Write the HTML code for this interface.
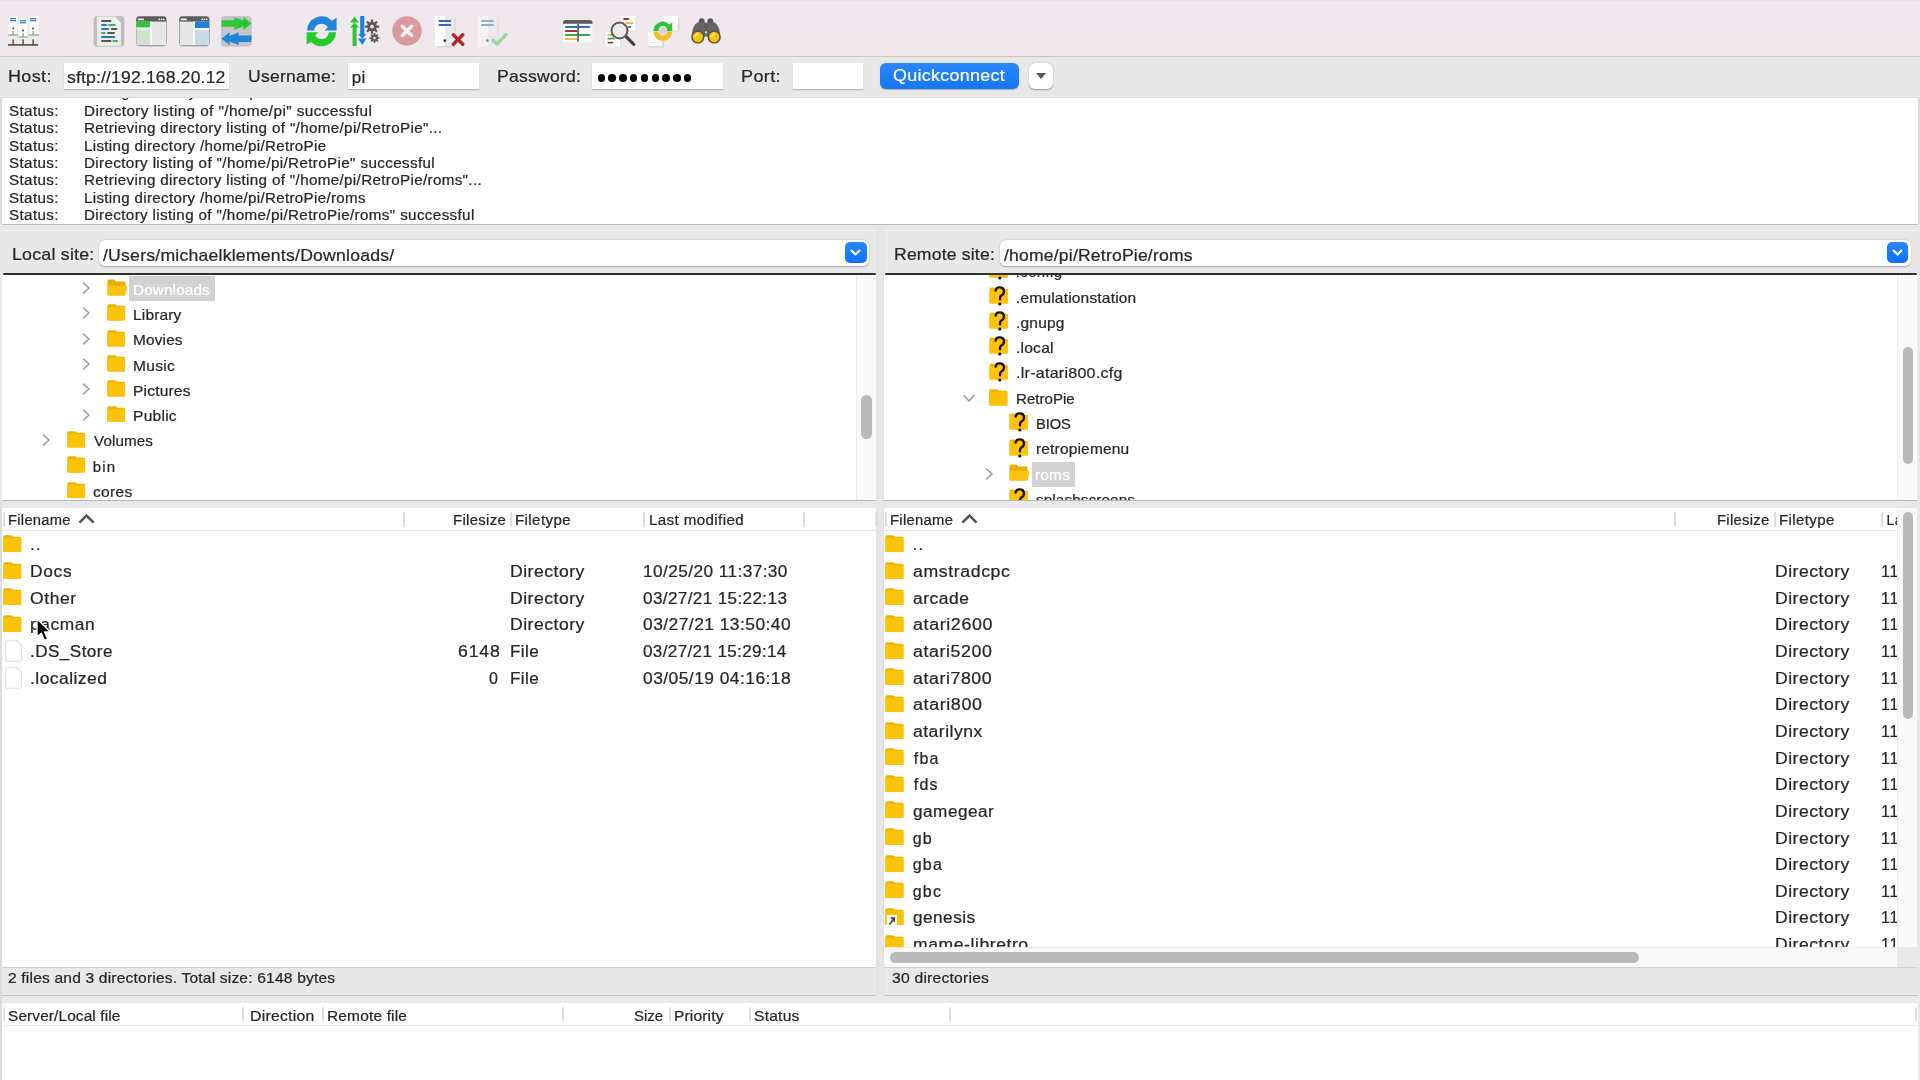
<!DOCTYPE html>
<html><head><meta charset="utf-8">
<style>
*{box-sizing:border-box;margin:0;padding:0}
html,body{width:1920px;height:1080px;overflow:hidden}
body{position:relative;background:#e8e8e8;font-family:"Liberation Sans",sans-serif;color:#262626}
.a{position:absolute;display:block}
.t{position:absolute;white-space:nowrap;line-height:1;-webkit-text-stroke:0.22px currentColor}
</style></head><body><div id="root" style="position:absolute;left:0;top:0;width:1920px;height:1080px;overflow:hidden;will-change:transform">
<div class="a" style="left:0px;top:0px;width:1920px;height:56px;background:linear-gradient(#f1e7ed,#efe9ec)"></div>
<div class="a" style="left:0px;top:0px;width:1920px;height:1px;background:#e9e1e6"></div>
<div class="a" style="left:0px;top:56px;width:1920px;height:1px;background:#c8c5c7"></div>
<svg class="a" style="left:0;top:0" width="760" height="56" viewBox="0 0 760 56">
<!-- 1 site manager (origin 4,12) -->
<g transform="translate(4,12)">
 <rect x="4.2" y="4" width="9.6" height="20" fill="#fbfbfb" stroke="#e2e2e2" stroke-width=".6"/>
 <rect x="24.2" y="4" width="11" height="20" fill="#fbfbfb" stroke="#e2e2e2" stroke-width=".6"/>
 <rect x="14" y="6" width="10" height="20" fill="#fdfdfd" stroke="#e2e2e2" stroke-width=".6"/>
 <rect x="6" y="6" width="6" height="1.3" fill="#3f7fc0"/><rect x="6" y="8" width="6" height="1.3" fill="#3f7fc0"/>
 <rect x="16" y="8" width="6" height="1.3" fill="#3f7fc0"/><rect x="16" y="10" width="6" height="1.3" fill="#3f7fc0"/>
 <rect x="26" y="6" width="6" height="1.3" fill="#3f7fc0"/><rect x="26" y="8" width="6" height="1.3" fill="#3f7fc0"/>
 <circle cx="9.3" cy="16.3" r=".9" fill="#333"/><circle cx="19" cy="18.5" r=".9" fill="#333"/><circle cx="29" cy="16.5" r=".9" fill="#333"/>
 <rect x="4.5" y="22.3" width="9.5" height="1.3" fill="#8aa98a"/><rect x="14.5" y="24.3" width="9.5" height="1.3" fill="#8aa98a"/><rect x="24.5" y="22.3" width="10.5" height="1.3" fill="#8aa98a"/>
 <rect x="8.5" y="19" width="1.2" height="4" fill="#7d9c7d"/><rect x="18.5" y="21" width="1.2" height="4" fill="#7d9c7d"/><rect x="28.5" y="19" width="1.2" height="4" fill="#7d9c7d"/>
 <rect x="8.3" y="27.3" width="1.6" height="6" fill="#5c5c5c"/><rect x="18.3" y="27.3" width="1.6" height="6" fill="#5c5c5c"/><rect x="28.3" y="27.3" width="1.6" height="6" fill="#5c5c5c"/>
 <rect x="4" y="32" width="30" height="1.8" fill="#5c5c5c"/>
</g>
<!-- 2 message log (origin 88,12) -->
<g transform="translate(88,12)">
 <rect x="5.6" y="4.1" width="30.7" height="30.7" rx="4" fill="#bdbdbd"/>
 <path d="M8.9 4.6 L26.5 4.6 L33 11 L33 34 L8.9 34 Z" fill="#ececec"/>
 <path d="M26.5 4.6 L26.5 11 L33 11 Z" fill="#fafafa"/>
 <g stroke-width="1.9" stroke-linecap="round">
 <path d="M14 9 H22.5" stroke="#555"/>
 <path d="M14 13 H18.3" stroke="#2d73c2"/><path d="M21.3 13 H26.8" stroke="#3cb64a"/>
 <path d="M14 17 H20.3" stroke="#2d73c2"/><path d="M23.8 17 H28.5" stroke="#555"/>
 <path d="M14 21 H16.8" stroke="#3cb64a"/><path d="M20 21 H26" stroke="#555"/>
 <path d="M14 25 H26.3" stroke="#2d73c2"/>
 <path d="M14 29 H22.5" stroke="#555"/><path d="M25.3 29 H29" stroke="#3cb64a"/>
 </g>
</g>
<!-- 3 local tree (origin 132,12) -->
<g transform="translate(132,12)">
 <rect x="4" y="5" width="30.5" height="29.5" rx="3" fill="#b5b5b5"/>
 <rect x="4.3" y="4.3" width="30" height="29" rx="3" fill="#5d5d5d"/>
 <rect x="4.6" y="9.6" width="29.4" height="23.4" fill="#e7e7e7"/>
 <rect x="4.6" y="9.6" width="13.5" height="6" fill="#2fc83a"/>
 <rect x="4.6" y="17.5" width="13.5" height="15.5" fill="#cfe2cc"/>
 <rect x="4.6" y="15.6" width="13.5" height="1.9" fill="#f4fff4"/>
 <rect x="18.1" y="9.6" width="1.9" height="23.4" fill="#f4fff4"/>
 <rect x="5.8" y="6.6" width="6" height="1.6" fill="#fff"/>
 <circle cx="27.2" cy="7.4" r=".8" fill="#fff"/><circle cx="29.5" cy="7.4" r=".8" fill="#fff"/><circle cx="31.7" cy="7.4" r=".8" fill="#fff"/>
</g>
<!-- 4 remote tree (origin 175,12) -->
<g transform="translate(175,12)">
 <rect x="4" y="5" width="30.5" height="29.5" rx="3" fill="#b5b5b5"/>
 <rect x="4.3" y="4.3" width="30" height="29" rx="3" fill="#5d5d5d"/>
 <rect x="4.6" y="9.6" width="29.4" height="23.4" fill="#e7e7e7"/>
 <rect x="20" y="9.6" width="14" height="6.4" fill="#1e82d8"/>
 <rect x="20" y="18" width="14" height="15" fill="#c9d9e6"/>
 <rect x="20" y="16" width="14" height="2" fill="#f4fbff"/>
 <rect x="18.1" y="9.6" width="1.9" height="23.4" fill="#f4fbff"/>
 <rect x="5.8" y="6.6" width="6" height="1.6" fill="#fff"/>
 <circle cx="27.2" cy="7.4" r=".8" fill="#fff"/><circle cx="29.5" cy="7.4" r=".8" fill="#fff"/><circle cx="31.7" cy="7.4" r=".8" fill="#fff"/>
</g>
<!-- 5 transfer queue (origin 217,12) -->
<g transform="translate(217,12)">
 <rect x="4" y="4" width="30.8" height="30.8" rx="4" fill="#c6c4c6"/>
 <path d="M4.6 8.2 H17.4 V5 L26.4 8.6 V5 L34.6 11.5 L26.4 18 V14.4 L17.4 18 V14.8 H4.6 Z" fill="#2cc936"/>
 <path d="M26.4 8.6 L34.6 11.5 L26.4 14.4 Z" fill="#27b832" opacity=".5"/>
 <path d="M34.4 23.5 H21.6 V20.3 L12.6 23.9 V20.3 L4.4 26.7 L12.6 33.1 V29.5 L21.6 33.1 V29.9 H34.4 Z" fill="#1f84d8"/>
</g>
<!-- 6 refresh (origin 302,12) -->
<g transform="translate(302,12)">
 <path d="M5 18.5 A14.5 14.5 0 0 1 29.75 8.75 L34.6 5.8 L34.6 18.5 L22.6 18.5 L25.8 15.35 A7.3 7.3 0 0 0 12.2 18.5 Z" fill="#1f85db"/>
 <path d="M34 20.2 A14.5 14.5 0 0 1 9.25 29.9 L4.6 32.6 L4.6 20.2 L16.4 20.2 L13.2 23.3 A7.3 7.3 0 0 0 26.8 20.2 Z" fill="#24cb2f"/>
</g>
<!-- 7 process queue (origin 345,12) -->
<g transform="translate(345,12)">
 <path d="M7.6 34 V15.5 H5 L9.5 10.4 L5 10.4 L9.5 4.6 L14 10.4 L9.6 10.4 L14 15.5 H11.6 V34 Z" fill="#2bc836"/>
 <path d="M15.2 4 H19.3 V22 H21.5 L17.3 26.5 H21.5 L17.3 33 L13 26.5 H17.2 L13 22 H15.2 Z" fill="#1f80d4"/>
 <g fill="#5b5b5b">
  <circle cx="27" cy="14.6" r="4.9"/>
  <g stroke="#5b5b5b" stroke-width="2.2" stroke-linecap="butt">
   <path d="M27 7.4 V21.8 M19.8 14.6 H34.2 M21.9 9.5 L32.1 19.7 M32.1 9.5 L21.9 19.7"/>
  </g>
  <circle cx="29.5" cy="26" r="3.4"/>
  <g stroke="#5b5b5b" stroke-width="1.7">
   <path d="M29.5 21 V31 M24.5 26 H34.5 M26 22.5 L33 29.5 M33 22.5 L26 29.5"/>
  </g>
 </g>
 <circle cx="27" cy="14.6" r="1.9" fill="#efe8ec"/>
 <circle cx="29.5" cy="26" r="1.3" fill="#efe8ec"/>
</g>
<!-- 8 cancel (origin 387,12) -->
<g transform="translate(387,12)">
 <circle cx="20" cy="18.9" r="14.7" fill="#d89a9d"/>
 <path d="M15.3 14.3 L24.7 23.5 M24.7 14.3 L15.3 23.5" stroke="#fbeef0" stroke-width="3.6" stroke-linecap="round"/>
</g>
<!-- 9 disconnect (origin 430,12) -->
<g transform="translate(430,12)">
 <rect x="5" y="4" width="10.2" height="30.5" fill="#fdfdfd"/>
 <rect x="15.2" y="4" width="10" height="30.5" fill="#ebe9ea"/>
 <rect x="24.6" y="5" width=".9" height="29" fill="#cfcfcf"/>
 <rect x="7" y="34.3" width="18" height="1" fill="#c9c9c9"/>
 <path d="M9.4 9 H20.3 M9.4 13 H20.3" stroke="#2b6db3" stroke-width="1.8" stroke-linecap="round"/>
 <circle cx="14.8" cy="28.7" r="1.4" fill="#333"/>
 <path d="M23.3 22.8 L32.8 32.3 M32.8 22.8 L23.3 32.3" stroke="#b02828" stroke-width="3.4" stroke-linecap="round"/>
</g>
<!-- 10 reconnect disabled (origin 473,12) -->
<g transform="translate(473,12)">
 <rect x="5" y="4" width="10.2" height="30.5" fill="#f6f2f4"/>
 <rect x="15.2" y="4" width="10" height="30.5" fill="#ece8ea"/>
 <rect x="24.6" y="5" width=".9" height="29" fill="#dedcdd"/>
 <path d="M9 9 H20 M9 13 H20" stroke="#90aac6" stroke-width="1.8" stroke-linecap="round"/>
 <circle cx="14.3" cy="28.7" r="1.4" fill="#8a8a8a"/>
 <path d="M20 28.3 L23.8 32.1 L32.8 22.8" fill="none" stroke="#9cd59e" stroke-width="3.6" stroke-linecap="round" stroke-linejoin="round"/>
</g>
<!-- 11 filter (origin 558,12) -->
<g transform="translate(558,12)">
 <rect x="5.5" y="9" width="29.5" height="22" fill="#e3dfe1"/>
 <rect x="5" y="11.8" width="29.5" height="18.7" fill="#fff"/>
 <path d="M5 11.8 V10.5 Q5 8 7.5 8 H32 Q34.5 8 34.5 10.5 V11.8 Z" fill="#5d5d5d"/>
 <rect x="19.5" y="11.8" width="1.1" height="17.8" fill="#555"/>
 <g stroke-width="1.8" stroke-linecap="round">
  <path d="M7.8 15 H31.5" stroke="#3173b8"/>
  <path d="M7.8 19 H18.8" stroke="#a63a3a"/>
  <path d="M7.8 23 H31.5" stroke="#3aa84a"/>
  <path d="M7.8 27 H18.8" stroke="#e5c24c"/>
 </g>
 <rect x="19.5" y="11.8" width="1.1" height="17.8" fill="#555"/>
</g>
<!-- 12 search (origin 600,12) -->
<g transform="translate(600,12)">
 <rect x="21.3" y="4.6" width="15" height="14.5" fill="#e6e2e4"/>
 <rect x="20.5" y="4" width="15" height="14.5" fill="#fff"/>
 <path d="M24 7 H28.5" stroke="#a63535" stroke-width="1.8" stroke-linecap="round"/>
 <path d="M26.5 11 H32.5" stroke="#e8c04a" stroke-width="1.8" stroke-linecap="round"/>
 <path d="M28.3 15 H30.5" stroke="#3a9f4a" stroke-width="1.8" stroke-linecap="round"/>
 <rect x="6.3" y="20.6" width="14.5" height="14.5" fill="#e6e2e4"/>
 <rect x="5.5" y="20" width="14.5" height="14.5" fill="#fff"/>
 <path d="M8.3 23 H11.5" stroke="#e8c04a" stroke-width="1.8" stroke-linecap="round"/>
 <path d="M8.3 26.6 H14" stroke="#3a9f4a" stroke-width="1.8" stroke-linecap="round"/>
 <path d="M8.3 30.6 H12.5" stroke="#a63535" stroke-width="1.8" stroke-linecap="round"/>
 <path d="M26.5 25 L33.8 32.3" stroke="#444" stroke-width="3.2" stroke-linecap="round"/>
 <circle cx="19.5" cy="18.5" r="8" fill="#e9e9e9" fill-opacity=".9" stroke="#595959" stroke-width="2"/>
</g>
<!-- 13 sync browse (origin 643,12) -->
<g transform="translate(643,12)">
 <rect x="22" y="5.5" width="14.5" height="14" fill="#d9d5d9"/>
 <rect x="21" y="4" width="14" height="14.3" fill="#fdfdfd"/>
 <path d="M23.5 7 H27.5 M25 11 H31" stroke="#e4e4e4" stroke-width="1.2"/>
 <rect x="6" y="21.5" width="14.6" height="14" fill="#d9d5d9"/>
 <rect x="5" y="20" width="14.3" height="14" fill="#fdfdfd"/>
 <path d="M7.5 30.5 H12" stroke="#e4e4e4" stroke-width="1.2"/>
 <path d="M10.5 19 A9.3 9.3 0 0 1 26.5 12.6 L29.2 10.2 L29.2 19 L22.6 19 L24 17.3 A4.2 4.2 0 0 0 15.6 19 Z" fill="#2ec43a"/>
 <path d="M29.2 19.6 A9.3 9.3 0 0 1 10.5 19.6 L15.6 19.6 A4.2 4.2 0 0 0 24 19.6 Z" fill="#f0c020"/>
 <circle cx="19.8" cy="19.3" r="4" fill="#d8d4d8"/>
</g>
<!-- 14 binoculars (origin 685,12) -->
<g transform="translate(685,12)">
 <path d="M13.8 12 V9 Q13.8 6.2 16.7 6.2 Q19.6 6.2 19.6 9 V12 Z M22.4 12 V9 Q22.4 6.2 25.3 6.2 Q28.2 6.2 28.2 9 V12 Z" fill="#555"/>
 <path d="M6.8 25 C6.8 17 9.5 11.5 13 10.3 L20.5 10.3 L20.5 25 Z" fill="#666"/>
 <path d="M35.2 25 C35.2 17 32.5 11.5 29 10.3 L21.5 10.3 L21.5 25 Z" fill="#666"/>
 <rect x="19.6" y="11" width="2.8" height="12.5" fill="#5c5c5c"/>
 <rect x="20.2" y="19.3" width="1.6" height="2" fill="#fafafa"/>
 <circle cx="12.8" cy="25" r="6.6" fill="#5e4f1e"/>
 <circle cx="29.2" cy="25" r="6.6" fill="#5e4f1e"/>
 <circle cx="12.8" cy="25" r="5.2" fill="#f0bf18"/>
 <circle cx="29.2" cy="25" r="5.2" fill="#f0bf18"/>
 <path d="M10 24.5 L12.6 21.8" stroke="#fff4a0" stroke-width="1.6" stroke-linecap="round"/>
 <path d="M26.4 24.5 L29 21.8" stroke="#fff4a0" stroke-width="1.6" stroke-linecap="round"/>
</g>
</svg>

<div class="a" style="left:0px;top:57px;width:1920px;height:41px;background:#e8e8e8"></div>
<div class="a" style="left:0px;top:96.5px;width:1920px;height:1.5px;background:#dedede"></div>
<div class="t" style="left:7.94px;top:68.40px;font-size:17px;letter-spacing:0.340px;transform:scaleX(1.0584);transform-origin:0 0;">Host:</div>
<div class="a" style="left:64px;top:63px;width:165px;height:26px;background:#fff;box-shadow:0 1px 1px rgba(0,0,0,.22)"></div>
<div class="t" style="left:66.97px;top:69.20px;font-size:17px;letter-spacing:0.163px;transform:scaleX(1.0322);transform-origin:0 0;">sftp://192.168.20.12</div>
<div class="t" style="left:247.87px;top:68.40px;font-size:17px;letter-spacing:0.222px;transform:scaleX(1.0341);transform-origin:0 0;">Username:</div>
<div class="a" style="left:348px;top:63px;width:131px;height:26px;background:#fff;box-shadow:0 1px 1px rgba(0,0,0,.22)"></div>
<div class="t" style="left:351.70px;top:69.20px;font-size:17px;letter-spacing:0.300px;">pi</div>
<div class="t" style="left:496.96px;top:68.40px;font-size:17px;letter-spacing:0.217px;transform:scaleX(1.0351);transform-origin:0 0;">Password:</div>
<div class="a" style="left:592px;top:63px;width:131px;height:26px;background:#fff;box-shadow:0 1px 1px rgba(0,0,0,.22)"></div>
<div class="a" style="left:597.55px;top:74px;width:7.5px;height:7.5px;background:#000;border-radius:50%"></div>
<div class="a" style="left:608.3499999999999px;top:74px;width:7.5px;height:7.5px;background:#000;border-radius:50%"></div>
<div class="a" style="left:619.15px;top:74px;width:7.5px;height:7.5px;background:#000;border-radius:50%"></div>
<div class="a" style="left:629.9499999999999px;top:74px;width:7.5px;height:7.5px;background:#000;border-radius:50%"></div>
<div class="a" style="left:640.75px;top:74px;width:7.5px;height:7.5px;background:#000;border-radius:50%"></div>
<div class="a" style="left:651.55px;top:74px;width:7.5px;height:7.5px;background:#000;border-radius:50%"></div>
<div class="a" style="left:662.3499999999999px;top:74px;width:7.5px;height:7.5px;background:#000;border-radius:50%"></div>
<div class="a" style="left:673.15px;top:74px;width:7.5px;height:7.5px;background:#000;border-radius:50%"></div>
<div class="a" style="left:683.9499999999999px;top:74px;width:7.5px;height:7.5px;background:#000;border-radius:50%"></div>
<div class="t" style="left:740.94px;top:68.40px;font-size:17px;letter-spacing:0.330px;transform:scaleX(1.0618);transform-origin:0 0;">Port:</div>
<div class="a" style="left:793px;top:63px;width:70px;height:26px;background:#fff;box-shadow:0 1px 1px rgba(0,0,0,.22)"></div>
<div class="a" style="left:880px;top:62.5px;width:139px;height:26.5px;background:linear-gradient(#2a86fb,#1676f5);border-radius:6px;box-shadow:0 0.5px 1px rgba(0,0,0,.25)"></div>
<div class="t" style="left:892.70px;top:67.30px;font-size:17px;letter-spacing:0.303px;transform:scaleX(1.0515);transform-origin:0 0;color:#fff;">Quickconnect</div>
<div class="a" style="left:1029px;top:62.5px;width:24px;height:26.5px;background:#fff;border-radius:6px;box-shadow:0 0.5px 1.5px rgba(0,0,0,.35)"></div>
<svg class="a" style="left:1035px;top:72px" width="12" height="8" viewBox="0 0 12 8"><path d="M1 1 L11 1 L6 7 Z" fill="#555"/></svg>
<div class="a" style="left:0px;top:98px;width:2px;height:127px;background:#dcdcdc"></div>
<div class="a" style="left:1918px;top:98px;width:2px;height:127px;background:#dcdcdc"></div>
<div class="a" style="left:2px;top:98px;width:1916px;height:126px;background:#fff;overflow:hidden">
<div class="a" style="left:-2px;top:-98px;width:1920px;height:1080px">
<div class="t" style="left:8.92px;top:84.80px;font-size:14px;letter-spacing:0.354px;transform:scaleX(1.0821);transform-origin:0 0;">Status:</div>
<div class="t" style="left:83.60px;top:84.80px;font-size:14px;letter-spacing:0.880px;">Listing directory /home/pi</div>
<div class="t" style="left:8.92px;top:103.96px;font-size:14px;letter-spacing:0.354px;transform:scaleX(1.0821);transform-origin:0 0;">Status:</div>
<div class="t" style="left:83.50px;top:103.96px;font-size:14px;letter-spacing:0.353px;transform:scaleX(1.0968);transform-origin:0 0;">Directory listing of "/home/pi" successful</div>
<div class="t" style="left:8.92px;top:121.32px;font-size:14px;letter-spacing:0.354px;transform:scaleX(1.0821);transform-origin:0 0;">Status:</div>
<div class="t" style="left:83.51px;top:121.32px;font-size:14px;letter-spacing:0.309px;transform:scaleX(1.0857);transform-origin:0 0;">Retrieving directory listing of "/home/pi/RetroPie"...</div>
<div class="t" style="left:8.92px;top:138.68px;font-size:14px;letter-spacing:0.354px;transform:scaleX(1.0821);transform-origin:0 0;">Status:</div>
<div class="t" style="left:83.52px;top:138.68px;font-size:14px;letter-spacing:0.305px;transform:scaleX(1.0789);transform-origin:0 0;">Listing directory /home/pi/RetroPie</div>
<div class="t" style="left:8.92px;top:156.04px;font-size:14px;letter-spacing:0.354px;transform:scaleX(1.0821);transform-origin:0 0;">Status:</div>
<div class="t" style="left:83.51px;top:156.04px;font-size:14px;letter-spacing:0.325px;transform:scaleX(1.0869);transform-origin:0 0;">Directory listing of "/home/pi/RetroPie" successful</div>
<div class="t" style="left:8.92px;top:173.40px;font-size:14px;letter-spacing:0.354px;transform:scaleX(1.0821);transform-origin:0 0;">Status:</div>
<div class="t" style="left:83.51px;top:173.40px;font-size:14px;letter-spacing:0.312px;transform:scaleX(1.0851);transform-origin:0 0;">Retrieving directory listing of "/home/pi/RetroPie/roms"...</div>
<div class="t" style="left:8.92px;top:190.76px;font-size:14px;letter-spacing:0.354px;transform:scaleX(1.0821);transform-origin:0 0;">Status:</div>
<div class="t" style="left:83.52px;top:190.76px;font-size:14px;letter-spacing:0.308px;transform:scaleX(1.0784);transform-origin:0 0;">Listing directory /home/pi/RetroPie/roms</div>
<div class="t" style="left:8.92px;top:208.12px;font-size:14px;letter-spacing:0.354px;transform:scaleX(1.0821);transform-origin:0 0;">Status:</div>
<div class="t" style="left:83.51px;top:208.12px;font-size:14px;letter-spacing:0.327px;transform:scaleX(1.0861);transform-origin:0 0;">Directory listing of "/home/pi/RetroPie/roms" successful</div>
</div></div>
<div class="a" style="left:2px;top:224px;width:1916px;height:1px;background:#bdbdbd"></div>
<div class="a" style="left:2px;top:230px;width:875px;height:1px;background:#f0f0f0"></div>
<div class="a" style="left:883px;top:230px;width:1035px;height:1px;background:#f0f0f0"></div>
<div class="a" style="left:877px;top:225px;width:6px;height:855px;background:#e6e6e6"></div>
<div class="a" style="left:876.5px;top:230px;width:1px;height:765px;background:#dedede"></div>
<div class="a" style="left:883px;top:230px;width:1px;height:765px;background:#e2e2e2"></div>
<div class="t" style="left:11.55px;top:245.60px;font-size:17px;letter-spacing:0.214px;transform:scaleX(1.0454);transform-origin:0 0;">Local site:</div>
<div class="a" style="left:99px;top:239.5px;width:770px;height:26.7px;background:#fff;border-radius:6px;box-shadow:0 0.5px 1.5px rgba(0,0,0,.3)"></div>
<div class="t" style="left:102.50px;top:246.50px;font-size:17px;letter-spacing:0.208px;transform:scaleX(1.0378);transform-origin:0 0;">/Users/michaelklements/Downloads/</div>
<div class="a" style="left:845px;top:242px;width:21.5px;height:21px;background:linear-gradient(#2e88fb,#0f70f4);border-radius:5px"></div>
<svg class="a" style="left:850.3px;top:249.3px" width="12" height="8" viewBox="0 0 12 8"><path d="M1.5 1.5 L5.5 5.5 L9.5 1.5" fill="none" stroke="#fff" stroke-width="2" stroke-linecap="round" stroke-linejoin="round"/></svg>
<div class="t" style="left:894.47px;top:245.60px;font-size:17px;letter-spacing:0.185px;transform:scaleX(1.0339);transform-origin:0 0;">Remote site:</div>
<div class="a" style="left:999.7px;top:239.5px;width:911.5px;height:26.7px;background:#fff;border-radius:6px;box-shadow:0 0.5px 1.5px rgba(0,0,0,.3)"></div>
<div class="t" style="left:1004.30px;top:246.60px;font-size:17px;letter-spacing:0.183px;transform:scaleX(1.0335);transform-origin:0 0;">/home/pi/RetroPie/roms</div>
<div class="a" style="left:1886.5px;top:242px;width:21.5px;height:21px;background:linear-gradient(#2e88fb,#0f70f4);border-radius:5px"></div>
<svg class="a" style="left:1891.8px;top:249.3px" width="12" height="8" viewBox="0 0 12 8"><path d="M1.5 1.5 L5.5 5.5 L9.5 1.5" fill="none" stroke="#fff" stroke-width="2" stroke-linecap="round" stroke-linejoin="round"/></svg>
<div class="a" style="left:3px;top:272.5px;width:872.5px;height:2px;background:#2f2f2f;border-radius:1px"></div>
<div class="a" style="left:885px;top:272.5px;width:1031.5px;height:2px;background:#2f2f2f;border-radius:1px"></div>
<div class="a" style="left:2px;top:274.5px;width:874px;height:225.5px;background:#fff;overflow:hidden">
<div class="a" style="left:-2px;top:-274.5px;width:1920px;height:1080px">
<svg class="a" style="left:82px;top:282.1px" width="9" height="12" viewBox="0 0 9 12"><path d="M1.5 1 L7 6 L1.5 11" fill="none" stroke="#9a9a9a" stroke-width="1.6" stroke-linecap="round" stroke-linejoin="round"/></svg>
<svg class="a" style="left:106.5px;top:278.8px" width="21" height="17" viewBox="0 0 21 17"><path d="M0.5 2 Q0.5 0.5 2 0.5 L6.5 0.5 Q7.5 0.5 8.2 1.6 L8.8 2.5 L17.5 2.5 Q18.5 2.5 18.5 3.8 L18.5 15.5 Q18.5 16.5 17.5 16.5 L1.5 16.5 Q0.5 16.5 0.5 15.5 Z" fill="#e9ae00"/><path d="M0.5 8 Q0.6 6.8 1.8 6.8 L19.2 6.8 Q20.6 6.8 20.3 8.2 L18.6 15.5 Q18.4 16.5 17.4 16.5 L1.5 16.5 Q0.5 16.5 0.5 15.5 Z" fill="#fec20f"/></svg>
<div class="a" style="left:129px;top:276.2px;width:86px;height:24.6px;background:#d2d2d2"></div>
<div class="t" style="left:132.73px;top:281.70px;font-size:15px;letter-spacing:0.120px;transform:scaleX(1.0201);transform-origin:0 0;color:#fff;">Downloads</div>
<svg class="a" style="left:82px;top:307.39000000000004px" width="9" height="12" viewBox="0 0 9 12"><path d="M1.5 1 L7 6 L1.5 11" fill="none" stroke="#9a9a9a" stroke-width="1.6" stroke-linecap="round" stroke-linejoin="round"/></svg>
<svg class="a" style="left:106.7px;top:304.49px" width="18.6" height="16.8" viewBox="0 0 18.6 16.8"><path d="M0.3 2 Q0.3 0.3 2 0.3 L7.56 0.3 Q8.56 0.3 9.36 1 L10.56 1.8 L17.1 1.8 Q18.3 1.8 18.3 3.2 L18.3 15.600000000000001 Q18.3 16.5 17.3 16.5 L1.3 16.5 Q0.3 16.5 0.3 15.600000000000001 Z" fill="#e9b302"/><path d="M0.3 3.6 Q0.3 2.7 1.3 2.7 L17.3 2.7 Q18.3 2.7 18.3 3.6 L18.3 15.600000000000001 Q18.3 16.5 17.3 16.5 L1.3 16.5 Q0.3 16.5 0.3 15.600000000000001 Z" fill="#fdc206"/></svg>
<div class="t" style="left:132.72px;top:306.99px;font-size:15px;letter-spacing:0.161px;transform:scaleX(1.0333);transform-origin:0 0;">Library</div>
<svg class="a" style="left:82px;top:332.68px" width="9" height="12" viewBox="0 0 9 12"><path d="M1.5 1 L7 6 L1.5 11" fill="none" stroke="#9a9a9a" stroke-width="1.6" stroke-linecap="round" stroke-linejoin="round"/></svg>
<svg class="a" style="left:106.7px;top:329.78px" width="18.6" height="16.8" viewBox="0 0 18.6 16.8"><path d="M0.3 2 Q0.3 0.3 2 0.3 L7.56 0.3 Q8.56 0.3 9.36 1 L10.56 1.8 L17.1 1.8 Q18.3 1.8 18.3 3.2 L18.3 15.600000000000001 Q18.3 16.5 17.3 16.5 L1.3 16.5 Q0.3 16.5 0.3 15.600000000000001 Z" fill="#e9b302"/><path d="M0.3 3.6 Q0.3 2.7 1.3 2.7 L17.3 2.7 Q18.3 2.7 18.3 3.6 L18.3 15.600000000000001 Q18.3 16.5 17.3 16.5 L1.3 16.5 Q0.3 16.5 0.3 15.600000000000001 Z" fill="#fdc206"/></svg>
<div class="t" style="left:132.72px;top:332.28px;font-size:15px;letter-spacing:0.156px;transform:scaleX(1.0261);transform-origin:0 0;">Movies</div>
<svg class="a" style="left:82px;top:357.97px" width="9" height="12" viewBox="0 0 9 12"><path d="M1.5 1 L7 6 L1.5 11" fill="none" stroke="#9a9a9a" stroke-width="1.6" stroke-linecap="round" stroke-linejoin="round"/></svg>
<svg class="a" style="left:106.7px;top:355.07px" width="18.6" height="16.8" viewBox="0 0 18.6 16.8"><path d="M0.3 2 Q0.3 0.3 2 0.3 L7.56 0.3 Q8.56 0.3 9.36 1 L10.56 1.8 L17.1 1.8 Q18.3 1.8 18.3 3.2 L18.3 15.600000000000001 Q18.3 16.5 17.3 16.5 L1.3 16.5 Q0.3 16.5 0.3 15.600000000000001 Z" fill="#e9b302"/><path d="M0.3 3.6 Q0.3 2.7 1.3 2.7 L17.3 2.7 Q18.3 2.7 18.3 3.6 L18.3 15.600000000000001 Q18.3 16.5 17.3 16.5 L1.3 16.5 Q0.3 16.5 0.3 15.600000000000001 Z" fill="#fdc206"/></svg>
<div class="t" style="left:132.71px;top:357.57px;font-size:15px;letter-spacing:0.241px;transform:scaleX(1.0395);transform-origin:0 0;">Music</div>
<svg class="a" style="left:82px;top:383.26000000000005px" width="9" height="12" viewBox="0 0 9 12"><path d="M1.5 1 L7 6 L1.5 11" fill="none" stroke="#9a9a9a" stroke-width="1.6" stroke-linecap="round" stroke-linejoin="round"/></svg>
<svg class="a" style="left:106.7px;top:380.36px" width="18.6" height="16.8" viewBox="0 0 18.6 16.8"><path d="M0.3 2 Q0.3 0.3 2 0.3 L7.56 0.3 Q8.56 0.3 9.36 1 L10.56 1.8 L17.1 1.8 Q18.3 1.8 18.3 3.2 L18.3 15.600000000000001 Q18.3 16.5 17.3 16.5 L1.3 16.5 Q0.3 16.5 0.3 15.600000000000001 Z" fill="#e9b302"/><path d="M0.3 3.6 Q0.3 2.7 1.3 2.7 L17.3 2.7 Q18.3 2.7 18.3 3.6 L18.3 15.600000000000001 Q18.3 16.5 17.3 16.5 L1.3 16.5 Q0.3 16.5 0.3 15.600000000000001 Z" fill="#fdc206"/></svg>
<div class="t" style="left:132.71px;top:382.86px;font-size:15px;letter-spacing:0.179px;transform:scaleX(1.0368);transform-origin:0 0;">Pictures</div>
<svg class="a" style="left:82px;top:408.55px" width="9" height="12" viewBox="0 0 9 12"><path d="M1.5 1 L7 6 L1.5 11" fill="none" stroke="#9a9a9a" stroke-width="1.6" stroke-linecap="round" stroke-linejoin="round"/></svg>
<svg class="a" style="left:106.7px;top:405.65px" width="18.6" height="16.8" viewBox="0 0 18.6 16.8"><path d="M0.3 2 Q0.3 0.3 2 0.3 L7.56 0.3 Q8.56 0.3 9.36 1 L10.56 1.8 L17.1 1.8 Q18.3 1.8 18.3 3.2 L18.3 15.600000000000001 Q18.3 16.5 17.3 16.5 L1.3 16.5 Q0.3 16.5 0.3 15.600000000000001 Z" fill="#e9b302"/><path d="M0.3 3.6 Q0.3 2.7 1.3 2.7 L17.3 2.7 Q18.3 2.7 18.3 3.6 L18.3 15.600000000000001 Q18.3 16.5 17.3 16.5 L1.3 16.5 Q0.3 16.5 0.3 15.600000000000001 Z" fill="#fdc206"/></svg>
<div class="t" style="left:132.71px;top:408.15px;font-size:15px;letter-spacing:0.211px;transform:scaleX(1.0423);transform-origin:0 0;">Public</div>
<svg class="a" style="left:42px;top:433.84000000000003px" width="9" height="12" viewBox="0 0 9 12"><path d="M1.5 1 L7 6 L1.5 11" fill="none" stroke="#9a9a9a" stroke-width="1.6" stroke-linecap="round" stroke-linejoin="round"/></svg>
<svg class="a" style="left:66.7px;top:430.94px" width="18.6" height="16.8" viewBox="0 0 18.6 16.8"><path d="M0.3 2 Q0.3 0.3 2 0.3 L7.56 0.3 Q8.56 0.3 9.36 1 L10.56 1.8 L17.1 1.8 Q18.3 1.8 18.3 3.2 L18.3 15.600000000000001 Q18.3 16.5 17.3 16.5 L1.3 16.5 Q0.3 16.5 0.3 15.600000000000001 Z" fill="#e9b302"/><path d="M0.3 3.6 Q0.3 2.7 1.3 2.7 L17.3 2.7 Q18.3 2.7 18.3 3.6 L18.3 15.600000000000001 Q18.3 16.5 17.3 16.5 L1.3 16.5 Q0.3 16.5 0.3 15.600000000000001 Z" fill="#fdc206"/></svg>
<div class="t" style="left:93.75px;top:433.44px;font-size:15px;letter-spacing:0.082px;transform:scaleX(1.0132);transform-origin:0 0;">Volumes</div>
<svg class="a" style="left:66.7px;top:456.23px" width="18.6" height="16.8" viewBox="0 0 18.6 16.8"><path d="M0.3 2 Q0.3 0.3 2 0.3 L7.56 0.3 Q8.56 0.3 9.36 1 L10.56 1.8 L17.1 1.8 Q18.3 1.8 18.3 3.2 L18.3 15.600000000000001 Q18.3 16.5 17.3 16.5 L1.3 16.5 Q0.3 16.5 0.3 15.600000000000001 Z" fill="#e9b302"/><path d="M0.3 3.6 Q0.3 2.7 1.3 2.7 L17.3 2.7 Q18.3 2.7 18.3 3.6 L18.3 15.600000000000001 Q18.3 16.5 17.3 16.5 L1.3 16.5 Q0.3 16.5 0.3 15.600000000000001 Z" fill="#fdc206"/></svg>
<div class="t" style="left:92.75px;top:458.73px;font-size:15px;letter-spacing:1.200px;">bin</div>
<svg class="a" style="left:66.7px;top:481.52px" width="18.6" height="16.8" viewBox="0 0 18.6 16.8"><path d="M0.3 2 Q0.3 0.3 2 0.3 L7.56 0.3 Q8.56 0.3 9.36 1 L10.56 1.8 L17.1 1.8 Q18.3 1.8 18.3 3.2 L18.3 15.600000000000001 Q18.3 16.5 17.3 16.5 L1.3 16.5 Q0.3 16.5 0.3 15.600000000000001 Z" fill="#e9b302"/><path d="M0.3 3.6 Q0.3 2.7 1.3 2.7 L17.3 2.7 Q18.3 2.7 18.3 3.6 L18.3 15.600000000000001 Q18.3 16.5 17.3 16.5 L1.3 16.5 Q0.3 16.5 0.3 15.600000000000001 Z" fill="#fdc206"/></svg>
<div class="t" style="left:92.71px;top:484.02px;font-size:15px;letter-spacing:0.240px;transform:scaleX(1.0429);transform-origin:0 0;">cores</div>
</div>
<div class="a" style="left:854px;top:0px;width:20px;height:226px;background:#f9f9f9;border-left:1px solid #ececec"></div>
<div class="a" style="left:859.1px;top:120.3px;width:10.8px;height:43.9px;background:#b9b9b9;border-radius:5.5px"></div>
</div>
<div class="a" style="left:2px;top:500px;width:874px;height:1px;background:#b8b8b8"></div>
<div class="a" style="left:884px;top:274.5px;width:1033px;height:225.5px;background:#fff;overflow:hidden">
<div class="a" style="left:-884px;top:-274.5px;width:1920px;height:1080px">
<svg class="a" style="left:989.4px;top:261.27px;overflow:visible" width="20" height="20" viewBox="0 0 20 20"><path d="M0.5 2.2 Q0.5 0.5 2 0.5 L4.5 0.5 Q5.5 0.5 6 1.4 L6.5 2 L18 2 Q19 2 19 3.2 L19 15.7 Q19 16.5 18 16.5 L1.5 16.5 Q0.5 16.5 0.5 15.7 Z" fill="#f2b600"/><path d="M0.5 3.6 Q0.5 2.8 1.3 2.8 L18.2 2.8 Q19 2.8 19 3.6 L19 15.7 Q19 16.5 18 16.5 L1.5 16.5 Q0.5 16.5 0.5 15.7 Z" fill="#fec20f"/><path d="M6.6 3.6 Q7 0.4 10.4 0.4 Q15 0.4 15 4.5 Q15 7.1 12.4 8.6 Q11 9.5 11 11 L11 12.3" fill="none" stroke="#1a1208" stroke-width="2.35" stroke-linecap="round" stroke-linejoin="round"/><circle cx="10.8" cy="17" r="1.6" fill="#1a1208"/></svg>
<div class="t" style="left:1015.80px;top:264.17px;font-size:15px;letter-spacing:0.350px;">.config</div>
<svg class="a" style="left:989.4px;top:286.59999999999997px;overflow:visible" width="20" height="20" viewBox="0 0 20 20"><path d="M0.5 2.2 Q0.5 0.5 2 0.5 L4.5 0.5 Q5.5 0.5 6 1.4 L6.5 2 L18 2 Q19 2 19 3.2 L19 15.7 Q19 16.5 18 16.5 L1.5 16.5 Q0.5 16.5 0.5 15.7 Z" fill="#f2b600"/><path d="M0.5 3.6 Q0.5 2.8 1.3 2.8 L18.2 2.8 Q19 2.8 19 3.6 L19 15.7 Q19 16.5 18 16.5 L1.5 16.5 Q0.5 16.5 0.5 15.7 Z" fill="#fec20f"/><path d="M6.6 3.6 Q7 0.4 10.4 0.4 Q15 0.4 15 4.5 Q15 7.1 12.4 8.6 Q11 9.5 11 11 L11 12.3" fill="none" stroke="#1a1208" stroke-width="2.35" stroke-linecap="round" stroke-linejoin="round"/><circle cx="10.8" cy="17" r="1.6" fill="#1a1208"/></svg>
<div class="t" style="left:1015.76px;top:289.50px;font-size:15px;letter-spacing:0.164px;transform:scaleX(1.0364);transform-origin:0 0;">.emulationstation</div>
<svg class="a" style="left:989.4px;top:311.92999999999995px;overflow:visible" width="20" height="20" viewBox="0 0 20 20"><path d="M0.5 2.2 Q0.5 0.5 2 0.5 L4.5 0.5 Q5.5 0.5 6 1.4 L6.5 2 L18 2 Q19 2 19 3.2 L19 15.7 Q19 16.5 18 16.5 L1.5 16.5 Q0.5 16.5 0.5 15.7 Z" fill="#f2b600"/><path d="M0.5 3.6 Q0.5 2.8 1.3 2.8 L18.2 2.8 Q19 2.8 19 3.6 L19 15.7 Q19 16.5 18 16.5 L1.5 16.5 Q0.5 16.5 0.5 15.7 Z" fill="#fec20f"/><path d="M6.6 3.6 Q7 0.4 10.4 0.4 Q15 0.4 15 4.5 Q15 7.1 12.4 8.6 Q11 9.5 11 11 L11 12.3" fill="none" stroke="#1a1208" stroke-width="2.35" stroke-linecap="round" stroke-linejoin="round"/><circle cx="10.8" cy="17" r="1.6" fill="#1a1208"/></svg>
<div class="t" style="left:1015.77px;top:314.83px;font-size:15px;letter-spacing:0.193px;transform:scaleX(1.0341);transform-origin:0 0;">.gnupg</div>
<svg class="a" style="left:989.4px;top:337.25999999999993px;overflow:visible" width="20" height="20" viewBox="0 0 20 20"><path d="M0.5 2.2 Q0.5 0.5 2 0.5 L4.5 0.5 Q5.5 0.5 6 1.4 L6.5 2 L18 2 Q19 2 19 3.2 L19 15.7 Q19 16.5 18 16.5 L1.5 16.5 Q0.5 16.5 0.5 15.7 Z" fill="#f2b600"/><path d="M0.5 3.6 Q0.5 2.8 1.3 2.8 L18.2 2.8 Q19 2.8 19 3.6 L19 15.7 Q19 16.5 18 16.5 L1.5 16.5 Q0.5 16.5 0.5 15.7 Z" fill="#fec20f"/><path d="M6.6 3.6 Q7 0.4 10.4 0.4 Q15 0.4 15 4.5 Q15 7.1 12.4 8.6 Q11 9.5 11 11 L11 12.3" fill="none" stroke="#1a1208" stroke-width="2.35" stroke-linecap="round" stroke-linejoin="round"/><circle cx="10.8" cy="17" r="1.6" fill="#1a1208"/></svg>
<div class="t" style="left:1015.76px;top:340.16px;font-size:15px;letter-spacing:0.184px;transform:scaleX(1.0436);transform-origin:0 0;">.local</div>
<svg class="a" style="left:989.4px;top:362.59px;overflow:visible" width="20" height="20" viewBox="0 0 20 20"><path d="M0.5 2.2 Q0.5 0.5 2 0.5 L4.5 0.5 Q5.5 0.5 6 1.4 L6.5 2 L18 2 Q19 2 19 3.2 L19 15.7 Q19 16.5 18 16.5 L1.5 16.5 Q0.5 16.5 0.5 15.7 Z" fill="#f2b600"/><path d="M0.5 3.6 Q0.5 2.8 1.3 2.8 L18.2 2.8 Q19 2.8 19 3.6 L19 15.7 Q19 16.5 18 16.5 L1.5 16.5 Q0.5 16.5 0.5 15.7 Z" fill="#fec20f"/><path d="M6.6 3.6 Q7 0.4 10.4 0.4 Q15 0.4 15 4.5 Q15 7.1 12.4 8.6 Q11 9.5 11 11 L11 12.3" fill="none" stroke="#1a1208" stroke-width="2.35" stroke-linecap="round" stroke-linejoin="round"/><circle cx="10.8" cy="17" r="1.6" fill="#1a1208"/></svg>
<div class="t" style="left:1015.73px;top:365.49px;font-size:15px;letter-spacing:0.260px;transform:scaleX(1.0664);transform-origin:0 0;">.lr-atari800.cfg</div>
<svg class="a" style="left:962.5px;top:394px" width="12" height="9" viewBox="0 0 12 9"><path d="M1 1.5 L6 7 L11 1.5" fill="none" stroke="#9a9a9a" stroke-width="1.6" stroke-linecap="round" stroke-linejoin="round"/></svg>
<svg class="a" style="left:989.2px;top:388.61999999999995px" width="18.7" height="16.9" viewBox="0 0 18.7 16.9"><path d="M0.3 2 Q0.3 0.3 2 0.3 L7.60 0.3 Q8.60 0.3 9.40 1 L10.60 1.8 L17.2 1.8 Q18.4 1.8 18.4 3.2 L18.4 15.7 Q18.4 16.599999999999998 17.4 16.599999999999998 L1.3 16.599999999999998 Q0.3 16.599999999999998 0.3 15.7 Z" fill="#e9b302"/><path d="M0.3 3.6 Q0.3 2.7 1.3 2.7 L17.4 2.7 Q18.4 2.7 18.4 3.6 L18.4 15.7 Q18.4 16.599999999999998 17.4 16.599999999999998 L1.3 16.599999999999998 Q0.3 16.599999999999998 0.3 15.7 Z" fill="#fdc206"/></svg>
<div class="t" style="left:1015.80px;top:390.82px;font-size:15px;letter-spacing:0.017px;transform:scaleX(1.0032);transform-origin:0 0;">RetroPie</div>
<svg class="a" style="left:1009.4px;top:413.24999999999994px;overflow:visible" width="20" height="20" viewBox="0 0 20 20"><path d="M0.5 2.2 Q0.5 0.5 2 0.5 L4.5 0.5 Q5.5 0.5 6 1.4 L6.5 2 L18 2 Q19 2 19 3.2 L19 15.7 Q19 16.5 18 16.5 L1.5 16.5 Q0.5 16.5 0.5 15.7 Z" fill="#f2b600"/><path d="M0.5 3.6 Q0.5 2.8 1.3 2.8 L18.2 2.8 Q19 2.8 19 3.6 L19 15.7 Q19 16.5 18 16.5 L1.5 16.5 Q0.5 16.5 0.5 15.7 Z" fill="#fec20f"/><path d="M6.6 3.6 Q7 0.4 10.4 0.4 Q15 0.4 15 4.5 Q15 7.1 12.4 8.6 Q11 9.5 11 11 L11 12.3" fill="none" stroke="#1a1208" stroke-width="2.35" stroke-linecap="round" stroke-linejoin="round"/><circle cx="10.8" cy="17" r="1.6" fill="#1a1208"/></svg>
<div class="t" style="left:1035.82px;top:416.15px;font-size:15px;letter-spacing:-0.136px;transform:scaleX(0.9824);transform-origin:0 0;">BIOS</div>
<svg class="a" style="left:1009.4px;top:438.58px;overflow:visible" width="20" height="20" viewBox="0 0 20 20"><path d="M0.5 2.2 Q0.5 0.5 2 0.5 L4.5 0.5 Q5.5 0.5 6 1.4 L6.5 2 L18 2 Q19 2 19 3.2 L19 15.7 Q19 16.5 18 16.5 L1.5 16.5 Q0.5 16.5 0.5 15.7 Z" fill="#f2b600"/><path d="M0.5 3.6 Q0.5 2.8 1.3 2.8 L18.2 2.8 Q19 2.8 19 3.6 L19 15.7 Q19 16.5 18 16.5 L1.5 16.5 Q0.5 16.5 0.5 15.7 Z" fill="#fec20f"/><path d="M6.6 3.6 Q7 0.4 10.4 0.4 Q15 0.4 15 4.5 Q15 7.1 12.4 8.6 Q11 9.5 11 11 L11 12.3" fill="none" stroke="#1a1208" stroke-width="2.35" stroke-linecap="round" stroke-linejoin="round"/><circle cx="10.8" cy="17" r="1.6" fill="#1a1208"/></svg>
<div class="t" style="left:1035.77px;top:441.48px;font-size:15px;letter-spacing:0.166px;transform:scaleX(1.0324);transform-origin:0 0;">retropiemenu</div>
<svg class="a" style="left:984.5px;top:468px" width="9" height="12" viewBox="0 0 9 12"><path d="M1.5 1 L7 6 L1.5 11" fill="none" stroke="#9a9a9a" stroke-width="1.6" stroke-linecap="round" stroke-linejoin="round"/></svg>
<svg class="a" style="left:1009px;top:463.90999999999997px" width="21" height="17" viewBox="0 0 21 17"><path d="M0.5 2 Q0.5 0.5 2 0.5 L6.5 0.5 Q7.5 0.5 8.2 1.6 L8.8 2.5 L17.5 2.5 Q18.5 2.5 18.5 3.8 L18.5 15.5 Q18.5 16.5 17.5 16.5 L1.5 16.5 Q0.5 16.5 0.5 15.5 Z" fill="#e9ae00"/><path d="M0.5 8 Q0.6 6.8 1.8 6.8 L19.2 6.8 Q20.6 6.8 20.3 8.2 L18.6 15.5 Q18.4 16.5 17.4 16.5 L1.5 16.5 Q0.5 16.5 0.5 15.5 Z" fill="#fec20f"/></svg>
<div class="a" style="left:1032.2px;top:461.71px;width:42.5px;height:25px;background:#d2d2d2"></div>
<div class="t" style="left:1035.47px;top:466.81px;font-size:15px;letter-spacing:0.195px;transform:scaleX(1.0281);transform-origin:0 0;color:#fff;">roms</div>
<svg class="a" style="left:1009.4px;top:489.23999999999995px;overflow:visible" width="20" height="20" viewBox="0 0 20 20"><path d="M0.5 2.2 Q0.5 0.5 2 0.5 L4.5 0.5 Q5.5 0.5 6 1.4 L6.5 2 L18 2 Q19 2 19 3.2 L19 15.7 Q19 16.5 18 16.5 L1.5 16.5 Q0.5 16.5 0.5 15.7 Z" fill="#f2b600"/><path d="M0.5 3.6 Q0.5 2.8 1.3 2.8 L18.2 2.8 Q19 2.8 19 3.6 L19 15.7 Q19 16.5 18 16.5 L1.5 16.5 Q0.5 16.5 0.5 15.7 Z" fill="#fec20f"/><path d="M6.6 3.6 Q7 0.4 10.4 0.4 Q15 0.4 15 4.5 Q15 7.1 12.4 8.6 Q11 9.5 11 11 L11 12.3" fill="none" stroke="#1a1208" stroke-width="2.35" stroke-linecap="round" stroke-linejoin="round"/><circle cx="10.8" cy="17" r="1.6" fill="#1a1208"/></svg>
<div class="t" style="left:1035.78px;top:492.14px;font-size:15px;letter-spacing:0.098px;transform:scaleX(1.0189);transform-origin:0 0;">splashscreens</div>
</div>
<div class="a" style="left:1013px;top:0px;width:19px;height:226px;background:#f9f9f9;border-left:1px solid #ececec"></div>
<div class="a" style="left:1018.5px;top:72.5px;width:10.5px;height:117px;background:#b9b9b9;border-radius:5.5px"></div>
</div>
<div class="a" style="left:884px;top:500px;width:1033px;height:1px;background:#b8b8b8"></div>
<div class="a" style="left:2px;top:507.5px;width:874px;height:459.5px;background:#fff;overflow:hidden"></div>
<div class="a" style="left:2px;top:507.5px;width:874px;height:23px;background:#fff"></div>
<div class="a" style="left:2px;top:530px;width:874px;height:1px;background:#e6e6e6"></div>
<div class="a" style="left:3px;top:512px;width:2px;height:14.5px;background:#dedede;border-radius:1px"></div>
<div class="a" style="left:403px;top:512px;width:2px;height:14.5px;background:#dedede;border-radius:1px"></div>
<div class="a" style="left:509.5px;top:512px;width:2px;height:14.5px;background:#dedede;border-radius:1px"></div>
<div class="a" style="left:643px;top:512px;width:2px;height:14.5px;background:#dedede;border-radius:1px"></div>
<div class="a" style="left:803px;top:512px;width:2px;height:14.5px;background:#dedede;border-radius:1px"></div>
<div class="a" style="left:874.5px;top:512px;width:2px;height:14.5px;background:#dedede;border-radius:1px"></div>
<div class="t" style="left:7.65px;top:512.80px;font-size:14px;letter-spacing:0.266px;transform:scaleX(1.0525);transform-origin:0 0;">Filename</div>
<svg class="a" style="left:78px;top:512.5px" width="17" height="12" viewBox="0 0 17 12"><path d="M1.4 9.6 L8.5 2.6 L15.6 9.6" fill="none" stroke="#555" stroke-width="2.6" stroke-linejoin="miter"/></svg>
<div class="t" style="left:452.68px;top:512.80px;font-size:14px;letter-spacing:0.281px;transform:scaleX(1.0685);transform-origin:0 0;">Filesize</div>
<div class="t" style="left:515.17px;top:512.80px;font-size:14px;letter-spacing:0.344px;transform:scaleX(1.0813);transform-origin:0 0;">Filetype</div>
<div class="t" style="left:648.92px;top:512.80px;font-size:14px;letter-spacing:0.346px;transform:scaleX(1.0823);transform-origin:0 0;">Last modified</div>
<svg class="a" style="left:3px;top:534.95px" width="18.5" height="17.3" viewBox="0 0 18.5 17.3"><path d="M0.3 2 Q0.3 0.3 2 0.3 L7.51 0.3 Q8.51 0.3 9.31 1 L10.51 1.8 L17.0 1.8 Q18.2 1.8 18.2 3.2 L18.2 16.1 Q18.2 17.0 17.2 17.0 L1.3 17.0 Q0.3 17.0 0.3 16.1 Z" fill="#e9b302"/><path d="M0.3 3.6 Q0.3 2.7 1.3 2.7 L17.2 2.7 Q18.2 2.7 18.2 3.6 L18.2 16.1 Q18.2 17.0 17.2 17.0 L1.3 17.0 Q0.3 17.0 0.3 16.1 Z" fill="#fdc206"/></svg>
<div class="t" style="left:30.25px;top:537.35px;font-size:16px;letter-spacing:1.200px;">..</div>
<svg class="a" style="left:3px;top:561.6px" width="18.5" height="17.3" viewBox="0 0 18.5 17.3"><path d="M0.3 2 Q0.3 0.3 2 0.3 L7.51 0.3 Q8.51 0.3 9.31 1 L10.51 1.8 L17.0 1.8 Q18.2 1.8 18.2 3.2 L18.2 16.1 Q18.2 17.0 17.2 17.0 L1.3 17.0 Q0.3 17.0 0.3 16.1 Z" fill="#e9b302"/><path d="M0.3 3.6 Q0.3 2.7 1.3 2.7 L17.2 2.7 Q18.2 2.7 18.2 3.6 L18.2 16.1 Q18.2 17.0 17.2 17.0 L1.3 17.0 Q0.3 17.0 0.3 16.1 Z" fill="#fdc206"/></svg>
<div class="t" style="left:30.16px;top:564.00px;font-size:16px;letter-spacing:0.614px;transform:scaleX(1.0857);transform-origin:0 0;">Docs</div>
<div class="t" style="left:510.15px;top:564.00px;font-size:16px;letter-spacing:0.467px;transform:scaleX(1.0976);transform-origin:0 0;">Directory</div>
<div class="t" style="left:643.42px;top:564.00px;font-size:16px;letter-spacing:0.382px;transform:scaleX(1.0786);transform-origin:0 0;">10/25/20 11:37:30</div>
<svg class="a" style="left:3px;top:588.25px" width="18.5" height="17.3" viewBox="0 0 18.5 17.3"><path d="M0.3 2 Q0.3 0.3 2 0.3 L7.51 0.3 Q8.51 0.3 9.31 1 L10.51 1.8 L17.0 1.8 Q18.2 1.8 18.2 3.2 L18.2 16.1 Q18.2 17.0 17.2 17.0 L1.3 17.0 Q0.3 17.0 0.3 16.1 Z" fill="#e9b302"/><path d="M0.3 3.6 Q0.3 2.7 1.3 2.7 L17.2 2.7 Q18.2 2.7 18.2 3.6 L18.2 16.1 Q18.2 17.0 17.2 17.0 L1.3 17.0 Q0.3 17.0 0.3 16.1 Z" fill="#fdc206"/></svg>
<div class="t" style="left:30.16px;top:590.65px;font-size:16px;letter-spacing:0.549px;transform:scaleX(1.0923);transform-origin:0 0;">Other</div>
<div class="t" style="left:510.15px;top:590.65px;font-size:16px;letter-spacing:0.467px;transform:scaleX(1.0976);transform-origin:0 0;">Directory</div>
<div class="t" style="left:643.43px;top:590.65px;font-size:16px;letter-spacing:0.345px;transform:scaleX(1.0697);transform-origin:0 0;">03/27/21 15:22:13</div>
<svg class="a" style="left:3px;top:614.9px" width="18.5" height="17.3" viewBox="0 0 18.5 17.3"><path d="M0.3 2 Q0.3 0.3 2 0.3 L7.51 0.3 Q8.51 0.3 9.31 1 L10.51 1.8 L17.0 1.8 Q18.2 1.8 18.2 3.2 L18.2 16.1 Q18.2 17.0 17.2 17.0 L1.3 17.0 Q0.3 17.0 0.3 16.1 Z" fill="#e9b302"/><path d="M0.3 3.6 Q0.3 2.7 1.3 2.7 L17.2 2.7 Q18.2 2.7 18.2 3.6 L18.2 16.1 Q18.2 17.0 17.2 17.0 L1.3 17.0 Q0.3 17.0 0.3 16.1 Z" fill="#fdc206"/></svg>
<div class="t" style="left:30.17px;top:617.30px;font-size:16px;letter-spacing:0.555px;transform:scaleX(1.0818);transform-origin:0 0;">pacman</div>
<div class="t" style="left:510.15px;top:617.30px;font-size:16px;letter-spacing:0.467px;transform:scaleX(1.0976);transform-origin:0 0;">Directory</div>
<div class="t" style="left:643.41px;top:617.30px;font-size:16px;letter-spacing:0.425px;transform:scaleX(1.0874);transform-origin:0 0;">03/27/21 13:50:40</div>
<svg class="a" style="left:4.7px;top:639.8500000000001px" width="18" height="22" viewBox="0 0 18 22"><path d="M0.8 2.6 Q0.8 0.8 2.6 0.8 L12 0.8 L16.6 5.4 L16.6 19.6 Q16.6 21.2 15 21.2 L2.4 21.2 Q0.8 21.2 0.8 19.6 Z" fill="#fff" stroke="#e2e2e2" stroke-width="1.1"/><path d="M12 0.8 L16.6 5.4" fill="none" stroke="#e6e6e6" stroke-width="1"/></svg>
<div class="t" style="left:30.18px;top:643.95px;font-size:16px;letter-spacing:0.397px;transform:scaleX(1.0708);transform-origin:0 0;">.DS_Store</div>
<div class="t" style="left:457.64px;top:643.95px;font-size:16px;letter-spacing:0.723px;transform:scaleX(1.1059);transform-origin:0 0;">6148</div>
<div class="t" style="left:510.18px;top:643.95px;font-size:16px;letter-spacing:0.343px;transform:scaleX(1.0687);transform-origin:0 0;">File</div>
<div class="t" style="left:643.43px;top:643.95px;font-size:16px;letter-spacing:0.334px;transform:scaleX(1.0668);transform-origin:0 0;">03/27/21 15:29:14</div>
<svg class="a" style="left:4.7px;top:666.5000000000001px" width="18" height="22" viewBox="0 0 18 22"><path d="M0.8 2.6 Q0.8 0.8 2.6 0.8 L12 0.8 L16.6 5.4 L16.6 19.6 Q16.6 21.2 15 21.2 L2.4 21.2 Q0.8 21.2 0.8 19.6 Z" fill="#fff" stroke="#e2e2e2" stroke-width="1.1"/><path d="M12 0.8 L16.6 5.4" fill="none" stroke="#e6e6e6" stroke-width="1"/></svg>
<div class="t" style="left:30.16px;top:670.60px;font-size:16px;letter-spacing:0.407px;transform:scaleX(1.0923);transform-origin:0 0;">.localized</div>
<div class="t" style="left:489.00px;top:670.60px;font-size:16px;">0</div>
<div class="t" style="left:510.18px;top:670.60px;font-size:16px;letter-spacing:0.343px;transform:scaleX(1.0687);transform-origin:0 0;">File</div>
<div class="t" style="left:643.41px;top:670.60px;font-size:16px;letter-spacing:0.425px;transform:scaleX(1.0874);transform-origin:0 0;">03/05/19 04:16:18</div>
<div class="a" style="left:884px;top:507.5px;width:1033px;height:439.5px;background:#fff;overflow:hidden">
<div class="a" style="left:-884px;top:-507.5px;width:1920px;height:1080px">
<div class="a" style="left:884px;top:507.5px;width:1033px;height:23px;background:#fff"></div>
<div class="a" style="left:884px;top:530px;width:1033px;height:1px;background:#e6e6e6"></div>
<div class="a" style="left:885px;top:512px;width:2px;height:14.5px;background:#dedede;border-radius:1px"></div>
<div class="a" style="left:1673.5px;top:512px;width:2px;height:14.5px;background:#dedede;border-radius:1px"></div>
<div class="a" style="left:1773.5px;top:512px;width:2px;height:14.5px;background:#dedede;border-radius:1px"></div>
<div class="a" style="left:1880.5px;top:512px;width:2px;height:14.5px;background:#dedede;border-radius:1px"></div>
<div class="t" style="left:890.19px;top:512.80px;font-size:14px;letter-spacing:0.284px;transform:scaleX(1.0562);transform-origin:0 0;">Filename</div>
<svg class="a" style="left:961px;top:512.5px" width="17" height="12" viewBox="0 0 17 12"><path d="M1.4 9.6 L8.5 2.6 L15.6 9.6" fill="none" stroke="#555" stroke-width="2.6" stroke-linejoin="miter"/></svg>
<div class="t" style="left:1717.14px;top:512.80px;font-size:14px;letter-spacing:0.258px;transform:scaleX(1.0626);transform-origin:0 0;">Filesize</div>
<div class="t" style="left:1779.42px;top:512.80px;font-size:14px;letter-spacing:0.329px;transform:scaleX(1.0775);transform-origin:0 0;">Filetype</div>
<div class="t" style="left:1886.50px;top:512.80px;font-size:14px;letter-spacing:0.450px;">Last modified</div>
<svg class="a" style="left:885.3px;top:534.95px" width="18.8" height="17.3" viewBox="0 0 18.8 17.3"><path d="M0.3 2 Q0.3 0.3 2 0.3 L7.65 0.3 Q8.65 0.3 9.45 1 L10.65 1.8 L17.3 1.8 Q18.5 1.8 18.5 3.2 L18.5 16.1 Q18.5 17.0 17.5 17.0 L1.3 17.0 Q0.3 17.0 0.3 16.1 Z" fill="#e9b302"/><path d="M0.3 3.6 Q0.3 2.7 1.3 2.7 L17.5 2.7 Q18.5 2.7 18.5 3.6 L18.5 16.1 Q18.5 17.0 17.5 17.0 L1.3 17.0 Q0.3 17.0 0.3 16.1 Z" fill="#fdc206"/></svg>
<div class="t" style="left:912.75px;top:537.35px;font-size:16px;letter-spacing:1.200px;">..</div>
<svg class="a" style="left:885.3px;top:561.6px" width="18.8" height="17.3" viewBox="0 0 18.8 17.3"><path d="M0.3 2 Q0.3 0.3 2 0.3 L7.65 0.3 Q8.65 0.3 9.45 1 L10.65 1.8 L17.3 1.8 Q18.5 1.8 18.5 3.2 L18.5 16.1 Q18.5 17.0 17.5 17.0 L1.3 17.0 Q0.3 17.0 0.3 16.1 Z" fill="#e9b302"/><path d="M0.3 3.6 Q0.3 2.7 1.3 2.7 L17.5 2.7 Q18.5 2.7 18.5 3.6 L18.5 16.1 Q18.5 17.0 17.5 17.0 L1.3 17.0 Q0.3 17.0 0.3 16.1 Z" fill="#fdc206"/></svg>
<div class="t" style="left:912.65px;top:564.00px;font-size:16px;letter-spacing:0.564px;transform:scaleX(1.1037);transform-origin:0 0;">amstradcpc</div>
<div class="t" style="left:1774.60px;top:564.00px;font-size:16px;letter-spacing:0.469px;transform:scaleX(1.0981);transform-origin:0 0;">Directory</div>
<div class="t" style="left:1880.90px;top:564.00px;font-size:16px;letter-spacing:0.900px;">11/07/20 10:10:10</div>
<svg class="a" style="left:885.3px;top:588.25px" width="18.8" height="17.3" viewBox="0 0 18.8 17.3"><path d="M0.3 2 Q0.3 0.3 2 0.3 L7.65 0.3 Q8.65 0.3 9.45 1 L10.65 1.8 L17.3 1.8 Q18.5 1.8 18.5 3.2 L18.5 16.1 Q18.5 17.0 17.5 17.0 L1.3 17.0 Q0.3 17.0 0.3 16.1 Z" fill="#e9b302"/><path d="M0.3 3.6 Q0.3 2.7 1.3 2.7 L17.5 2.7 Q18.5 2.7 18.5 3.6 L18.5 16.1 Q18.5 17.0 17.5 17.0 L1.3 17.0 Q0.3 17.0 0.3 16.1 Z" fill="#fdc206"/></svg>
<div class="t" style="left:912.66px;top:590.65px;font-size:16px;letter-spacing:0.497px;transform:scaleX(1.0862);transform-origin:0 0;">arcade</div>
<div class="t" style="left:1774.60px;top:590.65px;font-size:16px;letter-spacing:0.469px;transform:scaleX(1.0981);transform-origin:0 0;">Directory</div>
<div class="t" style="left:1880.90px;top:590.65px;font-size:16px;letter-spacing:0.900px;">11/07/20 10:10:10</div>
<svg class="a" style="left:885.3px;top:614.9px" width="18.8" height="17.3" viewBox="0 0 18.8 17.3"><path d="M0.3 2 Q0.3 0.3 2 0.3 L7.65 0.3 Q8.65 0.3 9.45 1 L10.65 1.8 L17.3 1.8 Q18.5 1.8 18.5 3.2 L18.5 16.1 Q18.5 17.0 17.5 17.0 L1.3 17.0 Q0.3 17.0 0.3 16.1 Z" fill="#e9b302"/><path d="M0.3 3.6 Q0.3 2.7 1.3 2.7 L17.5 2.7 Q18.5 2.7 18.5 3.6 L18.5 16.1 Q18.5 17.0 17.5 17.0 L1.3 17.0 Q0.3 17.0 0.3 16.1 Z" fill="#fdc206"/></svg>
<div class="t" style="left:912.63px;top:617.30px;font-size:16px;letter-spacing:0.560px;transform:scaleX(1.1154);transform-origin:0 0;">atari2600</div>
<div class="t" style="left:1774.60px;top:617.30px;font-size:16px;letter-spacing:0.469px;transform:scaleX(1.0981);transform-origin:0 0;">Directory</div>
<div class="t" style="left:1880.90px;top:617.30px;font-size:16px;letter-spacing:0.900px;">11/07/20 10:10:10</div>
<svg class="a" style="left:885.3px;top:641.5500000000001px" width="18.8" height="17.3" viewBox="0 0 18.8 17.3"><path d="M0.3 2 Q0.3 0.3 2 0.3 L7.65 0.3 Q8.65 0.3 9.45 1 L10.65 1.8 L17.3 1.8 Q18.5 1.8 18.5 3.2 L18.5 16.1 Q18.5 17.0 17.5 17.0 L1.3 17.0 Q0.3 17.0 0.3 16.1 Z" fill="#e9b302"/><path d="M0.3 3.6 Q0.3 2.7 1.3 2.7 L17.5 2.7 Q18.5 2.7 18.5 3.6 L18.5 16.1 Q18.5 17.0 17.5 17.0 L1.3 17.0 Q0.3 17.0 0.3 16.1 Z" fill="#fdc206"/></svg>
<div class="t" style="left:912.64px;top:643.95px;font-size:16px;letter-spacing:0.540px;transform:scaleX(1.1108);transform-origin:0 0;">atari5200</div>
<div class="t" style="left:1774.60px;top:643.95px;font-size:16px;letter-spacing:0.469px;transform:scaleX(1.0981);transform-origin:0 0;">Directory</div>
<div class="t" style="left:1880.90px;top:643.95px;font-size:16px;letter-spacing:0.900px;">11/07/20 10:10:10</div>
<svg class="a" style="left:885.3px;top:668.2px" width="18.8" height="17.3" viewBox="0 0 18.8 17.3"><path d="M0.3 2 Q0.3 0.3 2 0.3 L7.65 0.3 Q8.65 0.3 9.45 1 L10.65 1.8 L17.3 1.8 Q18.5 1.8 18.5 3.2 L18.5 16.1 Q18.5 17.0 17.5 17.0 L1.3 17.0 Q0.3 17.0 0.3 16.1 Z" fill="#e9b302"/><path d="M0.3 3.6 Q0.3 2.7 1.3 2.7 L17.5 2.7 Q18.5 2.7 18.5 3.6 L18.5 16.1 Q18.5 17.0 17.5 17.0 L1.3 17.0 Q0.3 17.0 0.3 16.1 Z" fill="#fdc206"/></svg>
<div class="t" style="left:912.64px;top:670.60px;font-size:16px;letter-spacing:0.530px;transform:scaleX(1.1085);transform-origin:0 0;">atari7800</div>
<div class="t" style="left:1774.60px;top:670.60px;font-size:16px;letter-spacing:0.469px;transform:scaleX(1.0981);transform-origin:0 0;">Directory</div>
<div class="t" style="left:1880.90px;top:670.60px;font-size:16px;letter-spacing:0.900px;">11/07/20 10:10:10</div>
<svg class="a" style="left:885.3px;top:694.85px" width="18.8" height="17.3" viewBox="0 0 18.8 17.3"><path d="M0.3 2 Q0.3 0.3 2 0.3 L7.65 0.3 Q8.65 0.3 9.45 1 L10.65 1.8 L17.3 1.8 Q18.5 1.8 18.5 3.2 L18.5 16.1 Q18.5 17.0 17.5 17.0 L1.3 17.0 Q0.3 17.0 0.3 16.1 Z" fill="#e9b302"/><path d="M0.3 3.6 Q0.3 2.7 1.3 2.7 L17.5 2.7 Q18.5 2.7 18.5 3.6 L18.5 16.1 Q18.5 17.0 17.5 17.0 L1.3 17.0 Q0.3 17.0 0.3 16.1 Z" fill="#fdc206"/></svg>
<div class="t" style="left:912.63px;top:697.25px;font-size:16px;letter-spacing:0.555px;transform:scaleX(1.1163);transform-origin:0 0;">atari800</div>
<div class="t" style="left:1774.60px;top:697.25px;font-size:16px;letter-spacing:0.469px;transform:scaleX(1.0981);transform-origin:0 0;">Directory</div>
<div class="t" style="left:1880.90px;top:697.25px;font-size:16px;letter-spacing:0.900px;">11/07/20 10:10:10</div>
<svg class="a" style="left:885.3px;top:721.5px" width="18.8" height="17.3" viewBox="0 0 18.8 17.3"><path d="M0.3 2 Q0.3 0.3 2 0.3 L7.65 0.3 Q8.65 0.3 9.45 1 L10.65 1.8 L17.3 1.8 Q18.5 1.8 18.5 3.2 L18.5 16.1 Q18.5 17.0 17.5 17.0 L1.3 17.0 Q0.3 17.0 0.3 16.1 Z" fill="#e9b302"/><path d="M0.3 3.6 Q0.3 2.7 1.3 2.7 L17.5 2.7 Q18.5 2.7 18.5 3.6 L18.5 16.1 Q18.5 17.0 17.5 17.0 L1.3 17.0 Q0.3 17.0 0.3 16.1 Z" fill="#fdc206"/></svg>
<div class="t" style="left:912.65px;top:723.90px;font-size:16px;letter-spacing:0.435px;transform:scaleX(1.0988);transform-origin:0 0;">atarilynx</div>
<div class="t" style="left:1774.60px;top:723.90px;font-size:16px;letter-spacing:0.469px;transform:scaleX(1.0981);transform-origin:0 0;">Directory</div>
<div class="t" style="left:1880.90px;top:723.90px;font-size:16px;letter-spacing:0.900px;">11/07/20 10:10:10</div>
<svg class="a" style="left:885.3px;top:748.15px" width="18.8" height="17.3" viewBox="0 0 18.8 17.3"><path d="M0.3 2 Q0.3 0.3 2 0.3 L7.65 0.3 Q8.65 0.3 9.45 1 L10.65 1.8 L17.3 1.8 Q18.5 1.8 18.5 3.2 L18.5 16.1 Q18.5 17.0 17.5 17.0 L1.3 17.0 Q0.3 17.0 0.3 16.1 Z" fill="#e9b302"/><path d="M0.3 3.6 Q0.3 2.7 1.3 2.7 L17.5 2.7 Q18.5 2.7 18.5 3.6 L18.5 16.1 Q18.5 17.0 17.5 17.0 L1.3 17.0 Q0.3 17.0 0.3 16.1 Z" fill="#fdc206"/></svg>
<div class="t" style="left:913.75px;top:750.55px;font-size:16px;letter-spacing:1.200px;">fba</div>
<div class="t" style="left:1774.60px;top:750.55px;font-size:16px;letter-spacing:0.469px;transform:scaleX(1.0981);transform-origin:0 0;">Directory</div>
<div class="t" style="left:1880.90px;top:750.55px;font-size:16px;letter-spacing:0.900px;">11/07/20 10:10:10</div>
<svg class="a" style="left:885.3px;top:774.8000000000001px" width="18.8" height="17.3" viewBox="0 0 18.8 17.3"><path d="M0.3 2 Q0.3 0.3 2 0.3 L7.65 0.3 Q8.65 0.3 9.45 1 L10.65 1.8 L17.3 1.8 Q18.5 1.8 18.5 3.2 L18.5 16.1 Q18.5 17.0 17.5 17.0 L1.3 17.0 Q0.3 17.0 0.3 16.1 Z" fill="#e9b302"/><path d="M0.3 3.6 Q0.3 2.7 1.3 2.7 L17.5 2.7 Q18.5 2.7 18.5 3.6 L18.5 16.1 Q18.5 17.0 17.5 17.0 L1.3 17.0 Q0.3 17.0 0.3 16.1 Z" fill="#fdc206"/></svg>
<div class="t" style="left:913.75px;top:777.20px;font-size:16px;letter-spacing:1.200px;">fds</div>
<div class="t" style="left:1774.60px;top:777.20px;font-size:16px;letter-spacing:0.469px;transform:scaleX(1.0981);transform-origin:0 0;">Directory</div>
<div class="t" style="left:1880.90px;top:777.20px;font-size:16px;letter-spacing:0.900px;">11/07/20 10:10:10</div>
<svg class="a" style="left:885.3px;top:801.45px" width="18.8" height="17.3" viewBox="0 0 18.8 17.3"><path d="M0.3 2 Q0.3 0.3 2 0.3 L7.65 0.3 Q8.65 0.3 9.45 1 L10.65 1.8 L17.3 1.8 Q18.5 1.8 18.5 3.2 L18.5 16.1 Q18.5 17.0 17.5 17.0 L1.3 17.0 Q0.3 17.0 0.3 16.1 Z" fill="#e9b302"/><path d="M0.3 3.6 Q0.3 2.7 1.3 2.7 L17.5 2.7 Q18.5 2.7 18.5 3.6 L18.5 16.1 Q18.5 17.0 17.5 17.0 L1.3 17.0 Q0.3 17.0 0.3 16.1 Z" fill="#fdc206"/></svg>
<div class="t" style="left:912.68px;top:803.85px;font-size:16px;letter-spacing:0.461px;transform:scaleX(1.0731);transform-origin:0 0;">gamegear</div>
<div class="t" style="left:1774.60px;top:803.85px;font-size:16px;letter-spacing:0.469px;transform:scaleX(1.0981);transform-origin:0 0;">Directory</div>
<div class="t" style="left:1880.90px;top:803.85px;font-size:16px;letter-spacing:0.900px;">11/07/20 10:10:10</div>
<svg class="a" style="left:885.3px;top:828.1px" width="18.8" height="17.3" viewBox="0 0 18.8 17.3"><path d="M0.3 2 Q0.3 0.3 2 0.3 L7.65 0.3 Q8.65 0.3 9.45 1 L10.65 1.8 L17.3 1.8 Q18.5 1.8 18.5 3.2 L18.5 16.1 Q18.5 17.0 17.5 17.0 L1.3 17.0 Q0.3 17.0 0.3 16.1 Z" fill="#e9b302"/><path d="M0.3 3.6 Q0.3 2.7 1.3 2.7 L17.5 2.7 Q18.5 2.7 18.5 3.6 L18.5 16.1 Q18.5 17.0 17.5 17.0 L1.3 17.0 Q0.3 17.0 0.3 16.1 Z" fill="#fdc206"/></svg>
<div class="t" style="left:912.75px;top:830.50px;font-size:16px;letter-spacing:1.200px;">gb</div>
<div class="t" style="left:1774.60px;top:830.50px;font-size:16px;letter-spacing:0.469px;transform:scaleX(1.0981);transform-origin:0 0;">Directory</div>
<div class="t" style="left:1880.90px;top:830.50px;font-size:16px;letter-spacing:0.900px;">11/07/20 10:10:10</div>
<svg class="a" style="left:885.3px;top:854.75px" width="18.8" height="17.3" viewBox="0 0 18.8 17.3"><path d="M0.3 2 Q0.3 0.3 2 0.3 L7.65 0.3 Q8.65 0.3 9.45 1 L10.65 1.8 L17.3 1.8 Q18.5 1.8 18.5 3.2 L18.5 16.1 Q18.5 17.0 17.5 17.0 L1.3 17.0 Q0.3 17.0 0.3 16.1 Z" fill="#e9b302"/><path d="M0.3 3.6 Q0.3 2.7 1.3 2.7 L17.5 2.7 Q18.5 2.7 18.5 3.6 L18.5 16.1 Q18.5 17.0 17.5 17.0 L1.3 17.0 Q0.3 17.0 0.3 16.1 Z" fill="#fdc206"/></svg>
<div class="t" style="left:912.75px;top:857.15px;font-size:16px;letter-spacing:1.200px;">gba</div>
<div class="t" style="left:1774.60px;top:857.15px;font-size:16px;letter-spacing:0.469px;transform:scaleX(1.0981);transform-origin:0 0;">Directory</div>
<div class="t" style="left:1880.90px;top:857.15px;font-size:16px;letter-spacing:0.900px;">11/07/20 10:10:10</div>
<svg class="a" style="left:885.3px;top:881.4px" width="18.8" height="17.3" viewBox="0 0 18.8 17.3"><path d="M0.3 2 Q0.3 0.3 2 0.3 L7.65 0.3 Q8.65 0.3 9.45 1 L10.65 1.8 L17.3 1.8 Q18.5 1.8 18.5 3.2 L18.5 16.1 Q18.5 17.0 17.5 17.0 L1.3 17.0 Q0.3 17.0 0.3 16.1 Z" fill="#e9b302"/><path d="M0.3 3.6 Q0.3 2.7 1.3 2.7 L17.5 2.7 Q18.5 2.7 18.5 3.6 L18.5 16.1 Q18.5 17.0 17.5 17.0 L1.3 17.0 Q0.3 17.0 0.3 16.1 Z" fill="#fdc206"/></svg>
<div class="t" style="left:912.75px;top:883.80px;font-size:16px;letter-spacing:1.200px;">gbc</div>
<div class="t" style="left:1774.60px;top:883.80px;font-size:16px;letter-spacing:0.469px;transform:scaleX(1.0981);transform-origin:0 0;">Directory</div>
<div class="t" style="left:1880.90px;top:883.80px;font-size:16px;letter-spacing:0.900px;">11/07/20 10:10:10</div>
<svg class="a" style="left:885.3px;top:908.0500000000001px" width="18.8" height="17.3" viewBox="0 0 18.8 17.3"><path d="M0.3 2 Q0.3 0.3 2 0.3 L7.65 0.3 Q8.65 0.3 9.45 1 L10.65 1.8 L17.3 1.8 Q18.5 1.8 18.5 3.2 L18.5 16.1 Q18.5 17.0 17.5 17.0 L1.3 17.0 Q0.3 17.0 0.3 16.1 Z" fill="#e9b302"/><path d="M0.3 3.6 Q0.3 2.7 1.3 2.7 L17.5 2.7 Q18.5 2.7 18.5 3.6 L18.5 16.1 Q18.5 17.0 17.5 17.0 L1.3 17.0 Q0.3 17.0 0.3 16.1 Z" fill="#fdc206"/></svg>
<svg class="a" style="left:886.5px;top:915.1500000000001px" width="10" height="11" viewBox="0 0 10 11"><rect x="0" y="0" width="10" height="11" fill="#fff"/><path d="M2.5 9.5 L7 3.5 M3.8 3.2 L7.3 3.2 L7.3 6.8" fill="none" stroke="#444" stroke-width="1.7"/></svg>
<div class="t" style="left:912.67px;top:910.45px;font-size:16px;letter-spacing:0.424px;transform:scaleX(1.0761);transform-origin:0 0;">genesis</div>
<div class="t" style="left:1774.60px;top:910.45px;font-size:16px;letter-spacing:0.469px;transform:scaleX(1.0981);transform-origin:0 0;">Directory</div>
<div class="t" style="left:1880.90px;top:910.45px;font-size:16px;letter-spacing:0.900px;">11/07/20 10:10:10</div>
<svg class="a" style="left:885.3px;top:934.6999999999999px" width="18.8" height="17.3" viewBox="0 0 18.8 17.3"><path d="M0.3 2 Q0.3 0.3 2 0.3 L7.65 0.3 Q8.65 0.3 9.45 1 L10.65 1.8 L17.3 1.8 Q18.5 1.8 18.5 3.2 L18.5 16.1 Q18.5 17.0 17.5 17.0 L1.3 17.0 Q0.3 17.0 0.3 16.1 Z" fill="#e9b302"/><path d="M0.3 3.6 Q0.3 2.7 1.3 2.7 L17.5 2.7 Q18.5 2.7 18.5 3.6 L18.5 16.1 Q18.5 17.0 17.5 17.0 L1.3 17.0 Q0.3 17.0 0.3 16.1 Z" fill="#fdc206"/></svg>
<div class="t" style="left:912.65px;top:937.10px;font-size:16px;letter-spacing:0.492px;transform:scaleX(1.1005);transform-origin:0 0;">mame-libretro</div>
<div class="t" style="left:1774.60px;top:937.10px;font-size:16px;letter-spacing:0.469px;transform:scaleX(1.0981);transform-origin:0 0;">Directory</div>
<div class="t" style="left:1880.90px;top:937.10px;font-size:16px;letter-spacing:0.900px;">11/07/20 10:10:10</div>
</div>
<div class="a" style="left:1013px;top:0px;width:20px;height:440px;background:#f9f9f9;border-left:1px solid #ececec"></div>
<div class="a" style="left:1019px;top:4.5px;width:10px;height:206.5px;background:#b9b9b9;border-radius:5px"></div>
</div>
<div class="a" style="left:884px;top:947px;width:1014px;height:20px;background:#f9f9f9;border-top:1px solid #ececec"></div>
<div class="a" style="left:889.5px;top:952px;width:749.5px;height:10.5px;background:#b9b9b9;border-radius:5.5px"></div>
<div class="a" style="left:1897px;top:947px;width:20px;height:20px;background:#e9e9e9"></div>
<div class="a" style="left:2px;top:967px;width:874px;height:1px;background:#d0d0d0"></div>
<div class="a" style="left:884px;top:967px;width:1033px;height:1px;background:#d0d0d0"></div>
<div class="t" style="left:8.46px;top:969.70px;font-size:15px;letter-spacing:0.164px;transform:scaleX(1.0403);transform-origin:0 0;">2 files and 3 directories. Total size: 6148 bytes</div>
<div class="t" style="left:891.85px;top:969.70px;font-size:15px;letter-spacing:0.201px;transform:scaleX(1.0462);transform-origin:0 0;">30 directories</div>
<div class="a" style="left:2px;top:995px;width:874px;height:1px;background:#c4c4c4"></div>
<div class="a" style="left:884px;top:995px;width:1034px;height:1px;background:#c4c4c4"></div>
<div class="a" style="left:0px;top:996px;width:1920px;height:6px;background:#e8e8e8"></div>
<div class="a" style="left:0px;top:500px;width:2px;height:580px;background:#dcdcdc"></div>
<div class="a" style="left:2px;top:1002.5px;width:1916px;height:77.5px;background:#fff"></div>
<div class="a" style="left:2px;top:1024.5px;width:1916px;height:1px;background:#ececec"></div>
<div class="a" style="left:3px;top:1007px;width:2px;height:13.5px;background:#dedede;border-radius:1px"></div>
<div class="a" style="left:242px;top:1007px;width:2px;height:13.5px;background:#dedede;border-radius:1px"></div>
<div class="a" style="left:322px;top:1007px;width:2px;height:13.5px;background:#dedede;border-radius:1px"></div>
<div class="a" style="left:562px;top:1007px;width:2px;height:13.5px;background:#dedede;border-radius:1px"></div>
<div class="a" style="left:669px;top:1007px;width:2px;height:13.5px;background:#dedede;border-radius:1px"></div>
<div class="a" style="left:749px;top:1007px;width:2px;height:13.5px;background:#dedede;border-radius:1px"></div>
<div class="a" style="left:949px;top:1007px;width:2px;height:13.5px;background:#dedede;border-radius:1px"></div>
<div class="a" style="left:1915px;top:1007px;width:2px;height:13.5px;background:#dedede;border-radius:1px"></div>
<div class="t" style="left:7.72px;top:1007.50px;font-size:15px;letter-spacing:0.116px;transform:scaleX(1.0269);transform-origin:0 0;">Server/Local file</div>
<div class="t" style="left:249.95px;top:1007.50px;font-size:15px;letter-spacing:0.238px;transform:scaleX(1.0526);transform-origin:0 0;">Direction</div>
<div class="t" style="left:326.97px;top:1007.50px;font-size:15px;letter-spacing:0.155px;transform:scaleX(1.0324);transform-origin:0 0;">Remote file</div>
<div class="t" style="left:634.00px;top:1007.50px;font-size:15px;">Size</div>
<div class="t" style="left:673.96px;top:1007.50px;font-size:15px;letter-spacing:0.152px;transform:scaleX(1.0359);transform-origin:0 0;">Priority</div>
<div class="t" style="left:753.96px;top:1007.50px;font-size:15px;letter-spacing:0.211px;transform:scaleX(1.0402);transform-origin:0 0;">Status</div>
<svg class="a" style="left:34px;top:615.8px" width="20" height="26" viewBox="0 0 20 26"><g transform="translate(3,3) scale(1.24)"><path d="M0 0 L0 14.6 L3.5 11.4 L6 17.2 L8.6 16.1 L6.1 10.4 L10.8 10.4 Z" fill="#000" stroke="#fff" stroke-width="1.1" stroke-linejoin="round"/></g></svg>
</div></body></html>
